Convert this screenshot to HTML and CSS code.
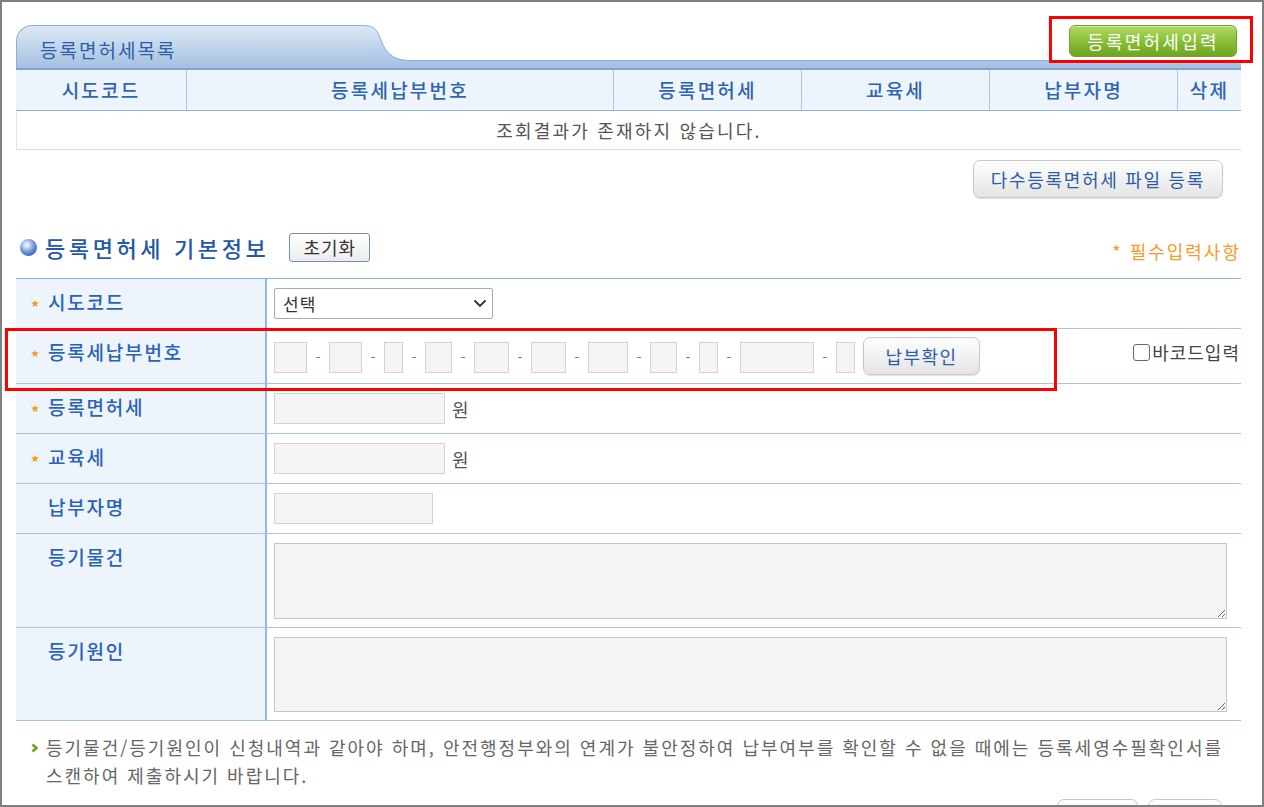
FILE: index.html
```html
<!DOCTYPE html>
<html lang="ko">
<head>
  <meta charset="UTF-8">
  <title>등록면허세목록</title>
  <link rel="stylesheet" href="styles.css">
</head>
<body>
  <div class="frame">
    <div class="list-bar">
      <div class="tab">등록면허세목록</div>
      <svg class="tab-curve" width="47" height="43" viewBox="0 0 47 43">
        <defs>
          <linearGradient id="tabGrad" x1="0" y1="0" x2="0" y2="43" gradientUnits="userSpaceOnUse">
            <stop offset="0" stop-color="#dce8f5"/>
            <stop offset="1" stop-color="#a4c0e1"/>
          </linearGradient>
        </defs>
        <path d="M0 0 C12 0 15 6 18 14 C23 28 30 35 47 35 L47 43 L0 43 Z" fill="url(#tabGrad)"/>
        <path d="M0 0.5 C12 0.5 14.5 6 17.5 14 C22.5 28.5 30 35.5 47 35.5" fill="none" stroke="#8eb0d8"/>
      </svg>
      <div class="tab-rest">
        <button class="btn-green">등록면허세입력</button>
        <div class="tab-strip"></div>
      </div>
    </div>

    <table class="list-table">
      <colgroup>
        <col class="c-sido">
        <col class="c-no">
        <col class="c-tax">
        <col class="c-edu">
        <col class="c-name">
        <col>
      </colgroup>
      <thead>
        <tr>
          <th>시도코드</th>
          <th>등록세납부번호</th>
          <th>등록면허세</th>
          <th>교육세</th>
          <th>납부자명</th>
          <th>삭제</th>
        </tr>
      </thead>
      <tbody>
        <tr>
          <td colspan="6" class="empty">조회결과가 존재하지 않습니다.</td>
        </tr>
      </tbody>
    </table>

    <div class="file-row">
      <button class="btn-gray">다수등록면허세 파일 등록</button>
    </div>

    <div class="section-head">
      <div class="section-title">
        <span class="ball"></span>
        <h2>등록면허세 기본정보</h2>
        <button class="btn-reset">초기화</button>
      </div>
      <span class="required-note">* 필수입력사항</span>
    </div>

    <table class="form-table">
      <colgroup>
        <col class="c-label">
        <col>
      </colgroup>
      <tr>
        <th><span class="req"><svg width="8" height="7" viewBox="0 0 8 7"><path d="M4 0 L5 2.3 L8 2.6 L5.6 4.2 L6.4 7 L4 5.4 L1.6 7 L2.4 4.2 L0 2.6 L3 2.3 Z" fill="#f39a22"/></svg></span>시도코드</th>
        <td>
          <div class="select">
            <span>선택</span>
            <svg width="14" height="9" viewBox="0 0 14 9"><path d="M1.5 1.5 L7 7 L12.5 1.5" fill="none" stroke="#333" stroke-width="1.8"/></svg>
          </div>
        </td>
      </tr>
      <tr>
        <th><span class="req"><svg width="8" height="7" viewBox="0 0 8 7"><path d="M4 0 L5 2.3 L8 2.6 L5.6 4.2 L6.4 7 L4 5.4 L1.6 7 L2.4 4.2 L0 2.6 L3 2.3 Z" fill="#f39a22"/></svg></span>등록세납부번호</th>
        <td class="pn-cell">
          <div class="pn-row">
            <input class="pn pn-m" type="text"><span class="dash">-</span>
            <input class="pn pn-m" type="text"><span class="dash">-</span>
            <input class="pn pn-xs" type="text"><span class="dash">-</span>
            <input class="pn pn-s" type="text"><span class="dash">-</span>
            <input class="pn pn-l" type="text"><span class="dash">-</span>
            <input class="pn pn-l" type="text"><span class="dash">-</span>
            <input class="pn pn-xl" type="text"><span class="dash">-</span>
            <input class="pn pn-s" type="text"><span class="dash">-</span>
            <input class="pn pn-xs" type="text"><span class="dash">-</span>
            <input class="pn pn-xxl" type="text"><span class="dash">-</span>
            <input class="pn pn-xs" type="text">
            <button class="btn-check">납부확인</button>
            <label class="barcode"><input type="checkbox">바코드입력</label>
          </div>
        </td>
      </tr>
      <tr>
        <th><span class="req"><svg width="8" height="7" viewBox="0 0 8 7"><path d="M4 0 L5 2.3 L8 2.6 L5.6 4.2 L6.4 7 L4 5.4 L1.6 7 L2.4 4.2 L0 2.6 L3 2.3 Z" fill="#f39a22"/></svg></span>등록면허세</th>
        <td><div class="field"><input class="txt txt-money" type="text"><span class="unit">원</span></div></td>
      </tr>
      <tr>
        <th><span class="req"><svg width="8" height="7" viewBox="0 0 8 7"><path d="M4 0 L5 2.3 L8 2.6 L5.6 4.2 L6.4 7 L4 5.4 L1.6 7 L2.4 4.2 L0 2.6 L3 2.3 Z" fill="#f39a22"/></svg></span>교육세</th>
        <td><div class="field"><input class="txt txt-money" type="text"><span class="unit">원</span></div></td>
      </tr>
      <tr>
        <th class="no-req">납부자명</th>
        <td><div class="field"><input class="txt txt-name" type="text"></div></td>
      </tr>
      <tr>
        <th class="no-req">등기물건</th>
        <td class="area-cell"><textarea class="area"></textarea></td>
      </tr>
      <tr>
        <th class="no-req">등기원인</th>
        <td class="area-cell"><textarea class="area area-short"></textarea></td>
      </tr>
    </table>

    <div class="notice">
      <svg class="chev" width="8" height="10" viewBox="0 0 8 10"><path d="M1.5 1.5 L5.5 5 L1.5 8.5" fill="none" stroke="#6ea51c" stroke-width="2.6"/></svg>
      <p>등기물건/등기원인이 신청내역과 같아야 하며, 안전행정부와의 연계가 불안정하여 납부여부를 확인할 수 없을 때에는 등록세영수필확인서를 스캔하여 제출하시기 바랍니다.</p>
    </div>

    <div class="bottom-btns">
      <button class="btn-gray btn-save" aria-label="확인"></button>
      <button class="btn-gray btn-cancel" aria-label="취소"></button>
    </div>

    <div class="mark mark-btn"></div>
    <div class="mark mark-row"></div>
  </div>
</body>
</html>
```

FILE: styles.css
```css
/* page frame */
body {
  margin: 0;
  font-family: "Noto Sans CJK KR", "Noto Sans", sans-serif;
  background: #fff;
}

.frame {
  position: relative;
  width: 1264px;
  height: 807px;
  box-sizing: border-box;
  border: 2px solid #7f7f7f;
  padding: 23px 21px 0 14px;
  overflow: hidden;
  background: #fff;
}

button {
  font-family: inherit;
  cursor: pointer;
}

/* list tab */
.list-bar {
  display: flex;
  height: 43px;
  border-bottom: 2px solid #7fa3d2;
}

.tab {
  width: 347px;
  box-sizing: border-box;
  border: 1px solid #8eb0d8;
  border-right: 0;
  border-bottom: 0;
  border-top-left-radius: 16px;
  background: linear-gradient(#dce8f5, #a4c0e1);
  color: #2b5ea8;
  font-size: 19px;
  letter-spacing: 2px;
  line-height: 48px;
  padding-left: 23px;
}

.tab-curve {
  display: block;
  flex: 0 0 47px;
}

.tab-rest {
  flex: 1;
  display: flex;
  flex-direction: column;
  align-items: flex-end;
}

.btn-green {
  width: 168px;
  height: 32px;
  margin: 0 4px 3px 0;
  padding: 0;
  border: 1px solid #73a22c;
  border-radius: 6px;
  background: linear-gradient(#aedb62, #86bd33 55%, #6fa420);
  box-shadow: inset 0 1px 0 rgba(255,255,255,.45);
  color: #fff;
  font-size: 18px;
  letter-spacing: 2.2px;
}

.tab-strip {
  align-self: stretch;
  height: 7px;
  border-top: 1px solid #8eb0d8;
  background: linear-gradient(#abc6e5, #a3bfe0);
}

/* list table */
.list-table {
  width: 100%;
  border-collapse: separate;
  border-spacing: 0;
  table-layout: fixed;
}

.list-table .c-sido { width: 171px; }
.list-table .c-no { width: 427px; }
.list-table .c-tax,
.list-table .c-edu,
.list-table .c-name { width: 188px; }

.list-table th {
  padding: 0;
  line-height: 40px;
  background: #eef4fc;
  border-right: 1px solid #a9c6ec;
  border-bottom: 1px solid #8db2e2;
  color: #2f64b2;
  font-size: 19px;
  font-weight: 500;
  letter-spacing: 2.2px;
}

.list-table th:last-child {
  border-right: 0;
}

.list-table .empty {
  padding: 0;
  line-height: 38px;
  text-align: center;
  color: #555;
  font-size: 18px;
  letter-spacing: 2.2px;
  border-left: 1px solid #e3e3e3;
  border-bottom: 1px solid #dcdcdc;
}

.file-row {
  display: flex;
  justify-content: flex-end;
  padding-right: 18px;
  margin-top: 10px;
}

.btn-gray {
  height: 38px;
  border: 1px solid #c9c9c9;
  border-radius: 7px;
  background: linear-gradient(#fefefe, #f1f1f1 50%, #e4e4e4);
  box-shadow: 0 1px 1px rgba(0,0,0,.12);
  color: #2a5ca8;
  font-size: 18px;
  letter-spacing: 1.7px;
  padding: 0 17px;
}

/* section title */
.section-head {
  display: flex;
  justify-content: space-between;
  align-items: flex-end;
  height: 30px;
  margin: 34px 0 16px;
}

.section-title {
  display: flex;
  align-items: center;
  height: 30px;
}

.ball {
  width: 17px;
  height: 17px;
  margin: 0 8px 0 4px;
  border-radius: 50%;
  background: radial-gradient(circle at 40% 35%, #ffffff 0, #c9d9f5 18%, #5c86d6 55%, #1f4597 100%);
}

.section-title h2 {
  margin: 0;
  color: #2458a8;
  font-size: 22px;
  font-weight: 500;
  letter-spacing: 3.6px;
  line-height: 30px;
}

.btn-reset {
  width: 81px;
  height: 29px;
  margin-left: 20px;
  padding: 0;
  border: 1px solid #6f8fb8;
  border-radius: 3px;
  background: linear-gradient(#ffffff, #ececec);
  color: #333;
  font-size: 18px;
  letter-spacing: 1px;
}

.required-note {
  color: #f39b2b;
  font-size: 18px;
  letter-spacing: 2px;
  line-height: 20px;
  padding-bottom: 1px;
}

/* form table */
.form-table {
  width: 100%;
  border-collapse: separate;
  border-spacing: 0;
  table-layout: fixed;
  border-top: 1px solid #8db2e2;
}

.form-table .c-label { width: 251px; }

.form-table th {
  vertical-align: top;
  text-align: left;
  padding: 10px 0 0 15px;
  line-height: 26px;
  background: #eef4fc;
  border-right: 2px solid #93b6e4;
  border-bottom: 1px solid #a6c4ea;
  color: #2a63b5;
  font-size: 19px;
  font-weight: 500;
  letter-spacing: 1.8px;
}

.form-table th.no-req {
  padding-left: 32px;
}

.req {
  display: inline-block;
  width: 8px;
  margin-right: 9px;
  vertical-align: 3px;
}

.req svg {
  display: block;
}

.form-table td {
  padding: 9px 7px;
  border-bottom: 1px solid #a6c4ea;
  color: #555;
  font-size: 18px;
}

.select {
  display: flex;
  justify-content: space-between;
  align-items: center;
  width: 219px;
  height: 31px;
  box-sizing: border-box;
  padding: 0 5px 0 8px;
  border: 1px solid #aaa;
  border-radius: 2px;
  color: #333;
  font-size: 17px;
  letter-spacing: 1px;
}

.pn-cell {
  padding-top: 8px !important;
  padding-bottom: 8px !important;
  padding-right: 1px !important;
}

.pn-row {
  display: flex;
  align-items: flex-end;
  height: 38px;
}

.pn,
.txt {
  height: 31px;
  box-sizing: border-box;
  margin: 0;
  padding: 0 4px;
  border: 1px solid #d3d3d3;
  background: #f4f4f4;
  font-family: inherit;
  font-size: 16px;
  outline: 0;
}

.pn {
  margin-bottom: 2px;
}

.pn-xs { width: 19px; }
.pn-s { width: 27px; }
.pn-m { width: 33px; }
.pn-l { width: 35px; }
.pn-xl { width: 40px; }
.pn-xxl { width: 74px; }

.dash {
  width: 22px;
  margin-bottom: 2px;
  text-align: center;
  line-height: 31px;
  color: #777;
  font-size: 14px;
}

.btn-check {
  width: 117px;
  height: 38px;
  margin-left: 8px;
  padding: 0;
  border: 1px solid #c9c9c9;
  border-radius: 7px;
  background: linear-gradient(#fefefe, #f1f1f1 50%, #e4e4e4);
  box-shadow: 0 1px 1px rgba(0,0,0,.12);
  color: #2a5ca8;
  font-size: 18px;
  letter-spacing: 1.5px;
}

.barcode {
  align-self: flex-start;
  display: flex;
  align-items: center;
  margin: 3px 0 0 auto;
  color: #444;
  font-size: 18px;
  letter-spacing: 1px;
  line-height: 24px;
}

.barcode input {
  appearance: none;
  width: 17px;
  height: 17px;
  margin: 0 2px 0 0;
  border: 1.5px solid #6a6a6a;
  border-radius: 3px;
  background: #fff;
}

.field {
  display: flex;
  align-items: center;
  gap: 7px;
}

.txt-money { width: 171px; }
.txt-name { width: 159px; }

.unit {
  color: #555;
  letter-spacing: 1px;
}

.area-cell {
  padding-bottom: 8px !important;
}

.area {
  display: block;
  width: 953px;
  height: 76px;
  box-sizing: border-box;
  margin: 0;
  border: 1px solid #c6c6c6;
  background: #f4f4f4;
  font-family: inherit;
  outline: 0;
}

.area-short {
  height: 75px;
}

/* notice */
.notice {
  display: flex;
  align-items: flex-start;
  margin-top: 12px;
}

.chev {
  flex: 0 0 8px;
  margin: 10px 7px 0 15px;
}

.notice p {
  margin: 0;
  color: #666;
  font-size: 18px;
  letter-spacing: 2px;
  line-height: 28px;
}

.bottom-btns {
  display: flex;
  justify-content: flex-end;
  gap: 10px;
  padding-right: 19px;
  margin-top: 10px;
}

.btn-save { width: 81px; padding: 0; }
.btn-cancel { width: 74px; padding: 0; }

/* red annotation boxes */
.mark {
  position: absolute;
  box-sizing: border-box;
  border: 3px solid #ff0000;
  pointer-events: none;
}

.mark-btn {
  left: 1047px;
  top: 14px;
  width: 204px;
  height: 47px;
}

.mark-row {
  left: 3px;
  top: 326px;
  width: 1052px;
  height: 63px;
}
```
